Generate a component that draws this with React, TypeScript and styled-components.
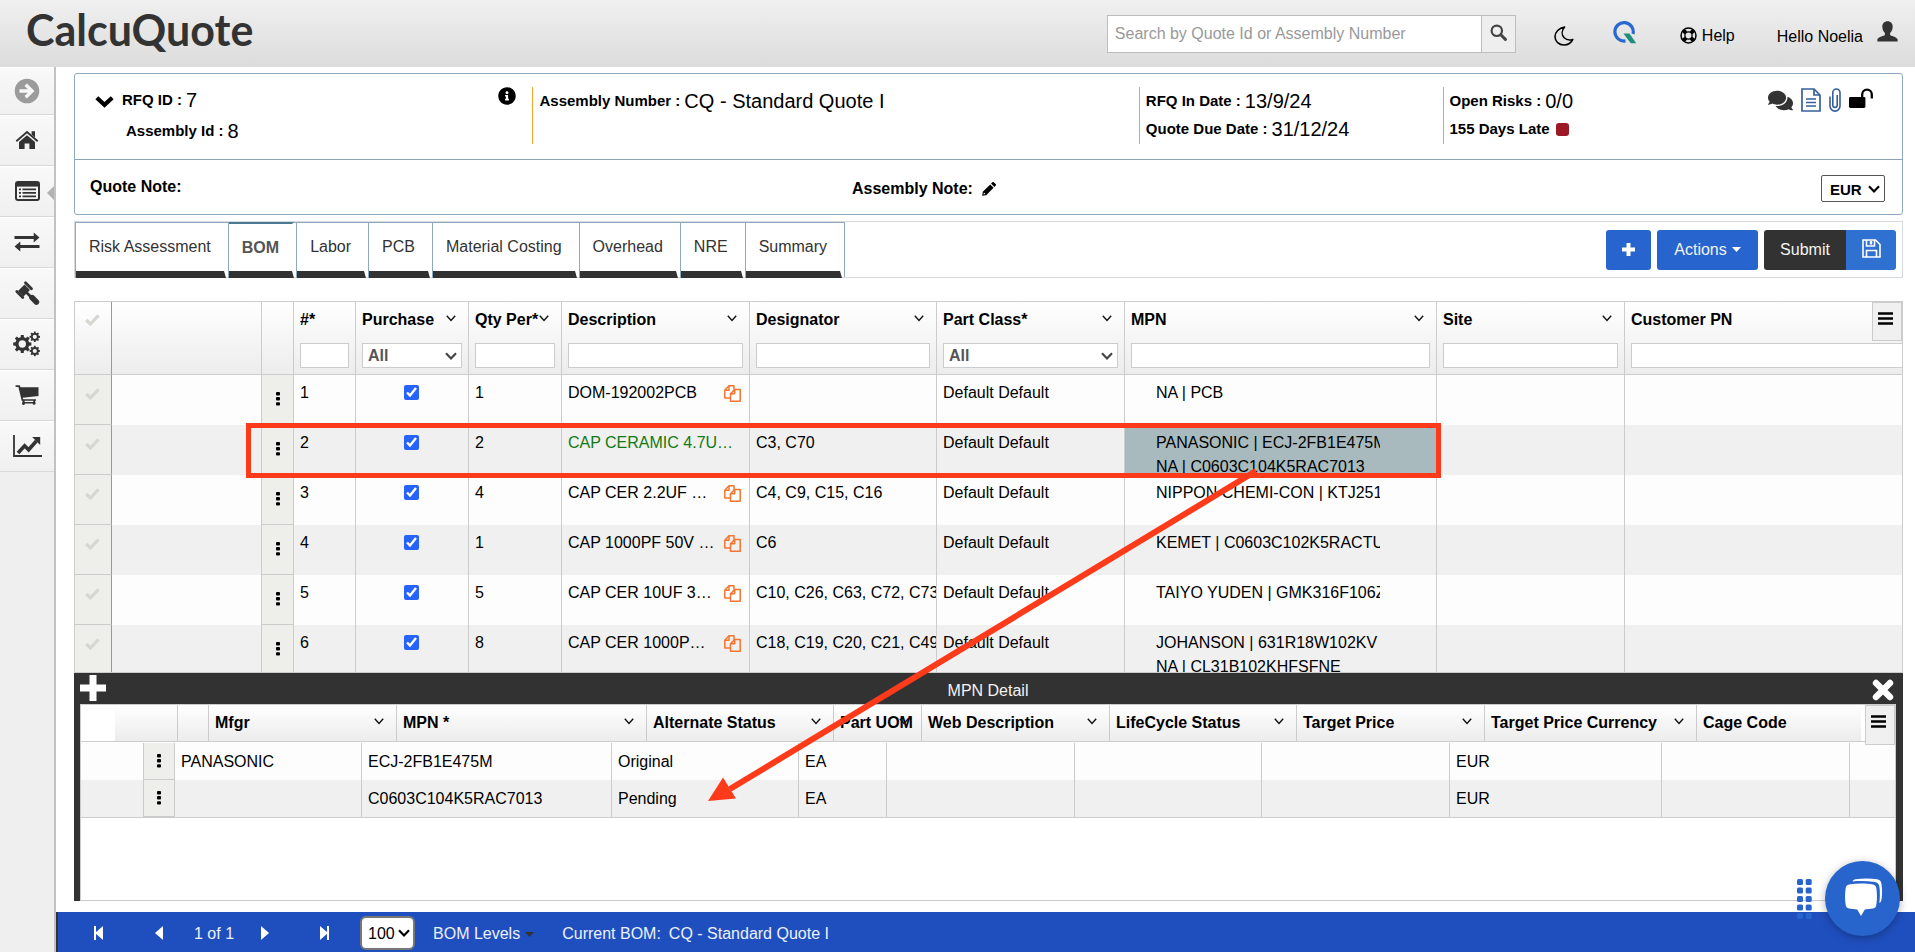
import React from 'react';
import styled, { createGlobalStyle } from 'styled-components';
import { FaInfoCircle, FaComments } from 'react-icons/fa';

const GlobalStyle = createGlobalStyle`
  *, *::before, *::after { box-sizing: border-box; }
  body {
    margin: 0;
    background: #fff;
    color: #000;
    font-family: "Liberation Sans", Arial, Helvetica, sans-serif;
    font-size: 16px;
    line-height: 20px;
  }
  button, input, select { font: inherit; color: inherit; }
  button { cursor: pointer; }
  svg { display: block; flex: none; }
`;

/* ---------- icons ---------- */

const gearPath = (cx: number, cy: number, r: number, teeth: number) => {
  const inner = r * 0.76;
  const step = (Math.PI * 2) / teeth;
  const points: string[] = [];
  for (let i = 0; i < teeth; i += 1) {
    const a = i * step;
    [
      [inner, -0.3],
      [r, -0.2],
      [r, 0.2],
      [inner, 0.3],
    ].forEach(([radius, k]) => {
      points.push(`${(cx + radius * Math.cos(a + k * step)).toFixed(2)} ${(cy + radius * Math.sin(a + k * step)).toFixed(2)}`);
    });
  }
  const h = r * 0.4;
  return `M${points.join('L')}ZM${cx - h} ${cy}a${h} ${h} 0 1 0 ${h * 2} 0a${h} ${h} 0 1 0 ${-h * 2} 0Z`;
};

const ArrowCircleIcon = () => (
  <svg width="26" height="26" viewBox="0 0 26 26">
    <circle cx="13" cy="13" r="12.3" fill="#9b9b9b" />
    <path d="M5.5 11.3h8.4l-3.4-3.4 2.4-2.4 7.6 7.5-7.6 7.5-2.4-2.4 3.4-3.4H5.5z" fill="#f7f7f7" />
  </svg>
);
const HomeIcon = () => (
  <svg width="24" height="20" viewBox="0 0 24 20" fill="#333">
    <path d="M12 5.2 20 12v7h-5.6v-5.6H9.6V19H4v-7z" />
    <path d="M1.3 11.2 12 2l10.7 9.2" fill="none" stroke="#333" strokeWidth="1.8" />
    <path d="M16.6 1.2H20v6.2l-3.4-3z" />
  </svg>
);
const ListIcon = () => (
  <svg width="25" height="20" viewBox="0 0 25 20">
    <rect x="1" y="1" width="23" height="18" rx="2" fill="none" stroke="#333" strokeWidth="2" />
    <path d="M1 1h23v4.6H1z" fill="#333" />
    <path d="M4 8.3h2M4 11.8h2M4 15.3h2M7.5 8.3H21M7.5 11.8H21M7.5 15.3H21" stroke="#333" strokeWidth="1.8" />
  </svg>
);
const ExchangeIcon = () => (
  <svg width="26" height="20" viewBox="0 0 26 20" fill="#333">
    <path d="M.5 3.9h19.2V.6l5.8 4.9-5.8 4.9V7.1H.5z" />
    <path d="M25.5 12.9H6.3V9.6L.5 14.5l5.8 4.9v-3.3h19.2z" />
  </svg>
);
const GavelIcon = () => (
  <svg width="26" height="26" viewBox="0 0 26 26" fill="none" stroke="#333" strokeLinecap="round">
    <path d="m11.500 2.800 6 6M2.800 11.500l6 6" strokeWidth="2.800" />
    <path d="m10.500 4.500 5.500 5.500-6.500 6.500L4 11z" fill="#333" stroke="none" />
    <path d="m12 12 5 5" strokeWidth="2.600" />
    <path d="m18 17.600 4.400 4.400" strokeWidth="5.600" />
  </svg>
);
const CogsIcon = () => (
  <svg width="28" height="26" viewBox="0 0 28 26" fill="#333" fillRule="evenodd">
    <path d={gearPath(9.3, 13, 9.2, 8)} />
    <path d={gearPath(21.8, 5.8, 5.3, 8)} />
    <path d={gearPath(21.8, 20, 5.3, 8)} />
  </svg>
);
const CartIcon = () => (
  <svg width="24" height="20" viewBox="0 0 24 20" fill="#333">
    <path d="M.6.2h4.2l.7 2h18V11L7.7 12.8l.5 1.4H21v1.6H6.7L3.4 2H.6z" />
    <path d="M7.6 15h2v2h8.6v-2h2v2.2a1.5 1.5 0 1 1-2.6 1.3H10a1.5 1.5 0 1 1-2.5-1.2z" />
  </svg>
);
const ChartIcon = () => (
  <svg width="29" height="22" viewBox="0 0 29 22" fill="none" stroke="#333">
    <path d="M1 0v21h28" strokeWidth="1.8" />
    <path d="m5 18 6.6-7.2 4 4L23.4 6" strokeWidth="3.6" />
    <path d="M19.2 2h8v8z" fill="#333" stroke="none" />
  </svg>
);
const SearchIcon = () => (
  <svg width="17" height="17" viewBox="0 0 17 17" fill="none" stroke="#444">
    <circle cx="6.8" cy="6.8" r="5.2" strokeWidth="2.2" />
    <path d="m10.8 10.8 4.6 4.6" strokeWidth="3" strokeLinecap="round" />
  </svg>
);
const MoonIcon = () => (
  <svg width="20" height="20" viewBox="0 0 20 20" fill="none" stroke="#000" strokeWidth="1.6" strokeLinejoin="round">
    <path d="M10.6 1C5 2 1 6 1 10.600 1 15.600 5 19 9.800 19c4 0 7.400-1.800 9-5.600-3 1-6.400.6-8.600-1.600C7.400 8.800 7.600 4.400 10.600 1z" />
  </svg>
);
const QLogo = () => (
  <svg width="25" height="23" viewBox="0 0 25 23" fill="none">
    <path d="M13.5 19.9A9.2 9.2 0 1 1 21 13" stroke="#2a69d0" strokeWidth="3.2" />
    <path d="M11.5 12.6h6l6.7 9.6h-5.4l-2.2-2.6z" fill="#1d8f7c" />
  </svg>
);
const LifeRingIcon = () => (
  <svg width="17" height="17" viewBox="0 0 17 17" fill="none" stroke="#000">
    <circle cx="8.5" cy="8.5" r="7.5" strokeWidth="1.5" />
    <circle cx="8.5" cy="8.5" r="3.6" strokeWidth="1.3" />
    <path d="m3.4 3.4 2.4 2.4M13.6 3.4l-2.4 2.4M3.4 13.6l2.4-2.4M13.6 13.6l-2.4-2.4" strokeWidth="4" />
  </svg>
);
const UserIcon = () => (
  <svg width="21" height="21" viewBox="0 0 21 21" fill="#333">
    <path d="M10.5.2c3.3 0 5.2 2.3 5.2 5.6 0 2.5-1 5-2.6 6.3v1.8c0 .7 6.9 2 7.4 4.2l.2 2.4H.3l.2-2.4C1 15.9 7.9 14.6 7.9 13.9v-1.8C6.3 10.8 5.3 8.3 5.3 5.8c0-3.3 1.9-5.6 5.2-5.6z" />
  </svg>
);
const ChevronBoldIcon = () => (
  <svg width="19" height="12" viewBox="0 0 19 12" fill="none" stroke="#000" strokeWidth="4.2">
    <path d="m1.8 1.8 7.7 7 7.7-7" />
  </svg>
);
const DocIcon = () => (
  <svg width="20" height="24" viewBox="0 0 20 24" fill="none" stroke="#35609c" strokeWidth="1.7">
    <path d="M1 1h12l6 6v16H1z" />
    <path d="M13 1v6h6" />
    <path d="M5 11h10M5 14.500h10M5 18h10" />
  </svg>
);
const ClipIcon = () => (
  <svg width="12" height="24" viewBox="0 0 12 24" fill="none" stroke="#35609c" strokeWidth="1.6">
    <path d="M1 8.5v9.6a5 5 0 0 0 10 0V4.6a3.6 3.6 0 0 0-7.2 0v12.6a2.2 2.2 0 0 0 4.4 0V7" />
  </svg>
);
const UnlockIcon = () => (
  <svg width="24" height="20" viewBox="0 0 24 20">
    <rect x="0" y="9" width="16.4" height="11" rx="1.4" fill="#000" />
    <path d="M13.2 10V6.4a4.8 4.8 0 0 1 9.6 0v4" fill="none" stroke="#000" strokeWidth="2.3" />
  </svg>
);
const PencilIcon = () => (
  <svg width="14" height="14" viewBox="0 0 14 14" fill="#000">
    <path d="M9 1.6 10.4.2a1 1 0 0 1 1.4 0l2 2a1 1 0 0 1 0 1.4L12.4 5z" />
    <path d="M8.2 2.4 11.6 5.8 4.2 13.2.2 13.8.8 9.8zM1.9 10.6l-.3 1.9 1.9-.4z" fillRule="evenodd" />
  </svg>
);
const PlusIcon = ({ size, thick }: { size: number; thick: number }) => (
  <svg width={size} height={size} viewBox={`0 0 ${size} ${size}`} stroke="#fff" strokeWidth={thick}>
    <path d={`M${size / 2} 0V${size}M0 ${size / 2}H${size}`} />
  </svg>
);
const CloseIcon = () => (
  <svg width="22" height="22" viewBox="0 0 22 22" stroke="#fff" strokeWidth="6.4" strokeLinecap="round">
    <path d="m4 4 14 14M18 4 4 18" />
  </svg>
);
const SaveIcon = () => (
  <svg width="19" height="19" viewBox="0 0 19 19" fill="none" stroke="#fff" strokeWidth="1.6">
    <path d="M1 1h12.5L18 5.5V18H1z" />
    <path d="M4.5 18v-6.5h10V18M4.5 1v6h8V1" />
    <path d="M9 2v3.5" strokeWidth="2.4" />
  </svg>
);
const CaretIcon = ({ color }: { color: string }) => (
  <svg width="9" height="5" viewBox="0 0 9 5" fill={color}>
    <path d="M0 0h9L4.5 5z" />
  </svg>
);
const ThinChevron = () => (
  <svg width="10" height="7" viewBox="0 0 10 7" fill="none" stroke="#111" strokeWidth="1.4">
    <path d="m.8.8 4.2 4.7L9.2.8" />
  </svg>
);
const SelectChevron = ({ color = '#333' }: { color?: string }) => (
  <svg width="12" height="8" viewBox="0 0 12 8" fill="none" stroke={color} strokeWidth="2.2">
    <path d="m1 1.2 5 5.2 5-5.2" />
  </svg>
);
const CheckIcon = () => (
  <svg width="15" height="12" viewBox="0 0 15 12" fill="none" stroke="#d6d6d3" strokeWidth="3.2">
    <path d="m1.2 6 4.2 4L13.6 1.4" />
  </svg>
);
const DotsIcon = () => (
  <svg width="4" height="14" viewBox="0 0 4 14" fill="#000">
    <rect width="4" height="3.4" rx="1" />
    <rect y="5.1" width="4" height="3.4" rx="1" />
    <rect y="10.2" width="4" height="3.4" rx="1" />
  </svg>
);
const CopyIcon = () => (
  <svg width="17" height="17" viewBox="0 0 17 17" fill="none" stroke="#f5752e" strokeWidth="1.5" strokeLinejoin="round">
    <path d="M6.5 13H.8V5.2L5 .8h5v4" />
    <path d="M5 .8v4.4H.8" />
    <path d="M6.5 16.2V8.800l4.200-4.200h5.500v11.600z" />
    <path d="M10.7 4.6v4.200H6.500" />
  </svg>
);
const MenuIcon = () => (
  <svg width="15" height="13" viewBox="0 0 15 13" stroke="#000" strokeWidth="2.4">
    <path d="M0 1.5h15M0 6.5h15M0 11.5h15" />
  </svg>
);
const StepIcon = ({ back, bar }: { back?: boolean; bar?: boolean }) => (
  <svg width="10" height="14" viewBox="0 0 10 14" fill="#fff">
    {back ? <path d="M9 0v14L1 7z" /> : <path d="M1 0v14l8-7z" />}
    {bar && (back ? <path d="M0 0h2v14H0z" /> : <path d="M8 0h2v14H8z" />)}
  </svg>
);
const ChatIcon = () => (
  <svg width="40" height="46" viewBox="0 0 40 46" fill="#fff">
    <path d="M6 8.5C14 7.2 23 7.2 30 8.5c2 .4 3 1.5 3.3 3.5.9 5.6.9 11.5 0 17-.3 2-1.3 3.2-3.3 3.5-2.8.5-5.5.8-8.2.9L18 40l-3.8-6.6c-2.8-.1-5.500-.4-8.200-.9-2-.3-3-1.500-3.300-3.500-.9-5.500-.9-11.400 0-17 .3-2 1.300-3.100 3.300-3.500z" />
    <path d="M9.5 5.4c.6-1.300 1.600-2 3-2.200 7-1 15-1 21.500 0 2.600.4 4 1.700 4.400 4.200.9 5.400.9 11.200 0 16.600-.2 1.400-.9 2.400-2 3 .6-5.400.7-12 0-16.300-.4-2.700-1.900-4.300-4.600-4.700-7-1.100-15-1.200-22.300-.6z" />
  </svg>
);

/* ---------- frame ---------- */

const Page = styled.div`
  display: flex;
  flex-direction: column;
  height: 100vh;
  min-height: 760px;
  overflow: hidden;
`;
const TopBar = styled.header`
  display: flex;
  align-items: center;
  flex: none;
  height: 67px;
  padding: 0 17px 0 26px;
  background: linear-gradient(#f0f0f0, #dcdcdc);
`;
const Logo = styled.a`
  margin-right: auto;
  padding-bottom: 8px;
  color: #333;
  font: bold 43px/48px Lato, "Liberation Sans", sans-serif;
  text-decoration: none;
`;
const SearchForm = styled.form`
  display: flex;
  width: 409px;
  height: 38px;
  margin-right: 38px;
  border: 1px solid #bdbdbd;
`;
const SearchInput = styled.input`
  flex: 1;
  min-width: 0;
  padding: 0 7px;
  border: 0;
  background: #fff;
  &::placeholder { color: #999; opacity: 1; }
`;
const SearchButton = styled.button`
  display: flex;
  align-items: center;
  justify-content: center;
  width: 34px;
  padding: 0 0 2px;
  border: 0;
  border-left: 1px solid #bdbdbd;
  background: #eee;
`;
const BarButton = styled.button<{ $gap?: number }>`
  display: flex;
  align-items: center;
  gap: 5px;
  margin-right: ${(p) => p.$gap ?? 0}px;
  padding: 4px 0 0;
  border: 0;
  background: none;
`;
const UserButton = styled(BarButton)`
  gap: 14px;
  padding: 0;
  svg { margin-bottom: 4px; }
  span { padding-top: 6px; }
`;
const LogoButton = styled(BarButton)`
  padding: 0 0 2px;
`;

const Body = styled.div`
  display: flex;
  flex: 1;
  min-height: 0;
`;
const Sidebar = styled.nav`
  flex: none;
  width: 56px;
  border-right: 2px solid #c2c2c2;
  background: #efefef;
`;
const SideLink = styled.a<{ $first?: boolean }>`
  position: relative;
  display: flex;
  align-items: center;
  justify-content: center;
  height: ${(p) => (p.$first ? 48 : 51)}px;
  border-bottom: 1px solid #d9d9d9;
  box-shadow: inset 0 1px #fff;
  background: linear-gradient(#f9f9f9, #f0f0f0);
`;
const ActiveMark = styled.span`
  position: absolute;
  right: 0;
  top: 20px;
  border: 7px solid transparent;
  border-left-width: 0;
  border-right-color: #b2b2b2;
`;
const Main = styled.main`
  display: flex;
  flex-direction: column;
  flex: 1;
  min-width: 0;
`;
const Workspace = styled.div`
  display: flex;
  flex-direction: column;
  flex: 1;
  min-height: 0;
  padding: 6px 12px 11px 18px;
`;

/* ---------- quote summary ---------- */

const Summary = styled.section`
  flex: none;
  border: 1px solid #8fa9c2;
  border-radius: 3px;
`;
const SummaryTop = styled.div`
  display: grid;
  grid-template-columns: 458fr 607fr 304fr 460fr;
  padding: 13px 0 15px;
  border-bottom: 1px solid #8fa3b8;
`;
const SummaryColumn = styled.div<{ $lined?: boolean }>`
  display: flex;
  align-items: flex-start;
  height: 57px;
  padding-left: ${(p) => (p.$lined ? 6 : 20)}px;
  border-left: ${(p) => (p.$lined ? '1px solid #f0a92c' : '0')};
`;
const FieldList = styled.dl<{ $indent?: boolean }>`
  display: flex;
  flex-direction: column;
  flex: 1;
  gap: ${(p) => (p.$indent ? 7 : 4)}px;
  margin: ${(p) => (p.$indent ? '1px 0 0 8px' : '2px 0 0')};
`;
const Field = styled.div<{ $inset?: boolean }>`
  display: flex;
  align-items: center;
  gap: 4px;
  height: 24px;
  padding-left: ${(p) => (p.$inset ? 4 : 0)}px;
  white-space: nowrap;
`;
const FieldName = styled.dt`
  font-size: 15px;
  font-weight: bold;
`;
const FieldValue = styled.dd`
  margin: 0;
  font-size: 20px;
  line-height: 24px;
`;
const LateFlag = styled.dd`
  width: 13px;
  height: 13px;
  margin: 0 0 0 2px;
  border-radius: 3px;
  background: #9b1826;
`;
const PlainButton = styled.button`
  display: flex;
  padding: 0;
  border: 0;
  background: none;
`;
const CollapseButton = styled(PlainButton)`
  padding-top: 9px;
`;
const InfoButton = styled(PlainButton)`
  margin-right: 16px;
`;
const QuickLinks = styled.div`
  display: flex;
  align-items: flex-start;
  gap: 8px;
  margin-right: 29px;
  padding-top: 1px;
`;
const SummaryNotes = styled.div`
  display: grid;
  grid-template-columns: 762fr 1033fr;
  align-items: center;
  height: 54px;
  padding: 0 17px 0 15px;
  font-weight: bold;
`;
const NoteCell = styled.div<{ $editable?: boolean }>`
  display: flex;
  align-items: center;
  gap: 9px;
  padding-top: ${(p) => (p.$editable ? 3 : 0)}px;
`;
const SelectBox = styled.label<{ $push?: boolean }>`
  position: relative;
  display: block;
  margin-left: ${(p) => (p.$push ? 'auto' : 0)};
  svg { position: absolute; right: 5px; top: 50%; margin-top: -4px; pointer-events: none; }
`;
const CurrencySelect = styled.select`
  width: 64px;
  height: 27px;
  padding: 2px 20px 0 8px;
  border: 1px solid #555;
  border-radius: 2px;
  appearance: none;
  background: #fff;
  font-size: 15px;
  font-weight: bold;
`;

/* ---------- tabs and actions ---------- */

const TabBar = styled.div`
  display: flex;
  flex: none;
  height: 57px;
  margin: 6px 0 23px;
  border: 1px solid #d6dade;
`;
const TabList = styled.ul`
  display: flex;
  margin: 0;
  padding: 0;
  border-top: 1px solid #8fa9c2;
  border-right: 1px solid #8fa9c2;
  list-style: none;
`;
const TabItem = styled.li<{ $active?: boolean }>`
  display: flex;
  margin-top: ${(p) => (p.$active ? -1 : 0)}px;
  margin-bottom: -1px;
  padding-right: 2px;
  border-left: 1px solid #8fa9c2;
`;
const TabButton = styled.button<{ $active?: boolean }>`
  padding: 0 13px;
  border: 0 solid transparent;
  border-top: ${(p) => (p.$active ? '2px solid #4a7a92' : '0')};
  border-right-width: 2px;
  border-bottom: 7px solid #323232;
  border-radius: 0;
  background: none;
  color: ${(p) => (p.$active ? '#555' : '#333')};
  font-weight: ${(p) => (p.$active ? 'bold' : 'normal')};
  white-space: nowrap;
`;
const ActionGroup = styled.div`
  display: flex;
  gap: 6px;
  margin: 8px 6px 0 auto;
`;
const ActionButton = styled.button<{ $width: number; $tone?: string }>`
  display: flex;
  align-items: center;
  justify-content: center;
  gap: 5px;
  width: ${(p) => p.$width}px;
  height: 40px;
  padding: 0 0 1px;
  border: 0;
  border-radius: 3px;
  background: ${(p) => p.$tone ?? '#2764cd'};
  color: #f4f4f4;
`;
const SplitButton = styled.div`
  display: flex;
  button:first-child { border-radius: 3px 0 0 3px; }
  button:last-child { border-radius: 0 3px 3px 0; padding-bottom: 4px; }
`;

/* ---------- grids ---------- */

const GridStack = styled.div`
  position: relative;
  display: flex;
  flex-direction: column;
  flex: 1;
  min-height: 0;
`;
const BomGrid = styled.div`
  position: relative;
  flex: 1;
  min-height: 0;
  overflow: hidden;
  border: 1px solid #ccc;
`;
const Table = styled.table`
  width: 100%;
  table-layout: fixed;
  border-spacing: 0;
  text-align: left;
`;
const HeadRow = styled.tr`
  background: linear-gradient(#fff, #ececec);
`;
const HeadCell = styled.th<{ $dark?: boolean; $last?: boolean }>`
  height: 73px;
  padding: ${(p) => (p.$last ? '8px 0 6px 6px' : '8px 6px 6px')};
  border-right: ${(p) => (p.$last ? '0' : `1px solid ${p.$dark ? '#999' : '#ccc'}`)};
  border-bottom: 1px solid #ccc;
  vertical-align: top;
`;
const HeadLabel = styled.div`
  display: flex;
  align-items: center;
  height: 20px;
  margin-bottom: 13px;
  padding-right: 6px;
  white-space: nowrap;
  span { flex: 1; min-width: 0; }
  svg { margin-bottom: 4px; }
`;
const HeadCheck = styled.div`
  display: flex;
  padding: 4px 0 0 4px;
`;
const FilterInput = styled.input<{ $open?: boolean }>`
  display: block;
  width: 100%;
  height: 25px;
  padding: 0 5px;
  border: 1px solid #ccc;
  border-right-width: ${(p) => (p.$open ? 0 : 1)}px;
  background: #fff;
`;
const FilterSelect = styled.select`
  display: block;
  width: 100%;
  height: 25px;
  padding: 0 20px 0 5px;
  border: 1px solid #ccc;
  border-radius: 0;
  appearance: none;
  background: #fff;
  color: #555;
  font-weight: bold;
`;
const GridMenu = styled.button<{ $height: number }>`
  position: absolute;
  top: 0;
  right: 0;
  display: flex;
  justify-content: center;
  width: 30px;
  height: ${(p) => p.$height}px;
  padding: 9px 3px 0 0;
  border: 1px solid #ccc;
  background: #f0f0f0;
`;
const BomRow = styled.tr`
  background: #fdfdfd;
  &:nth-child(even) { background: #f0f0f0; }
`;
const Cell = styled.td<{ $marked?: boolean; $last?: boolean }>`
  height: 50px;
  padding: 6px 0 0 6px;
  border-right: ${(p) => (p.$last ? '0' : '1px solid #ccc')};
  background: ${(p) => (p.$marked ? '#a8babd' : 'none')};
  vertical-align: top;
`;
const SideCell = styled.td<{ $dark?: boolean }>`
  height: 50px;
  padding: 0;
  border-right: 1px solid ${(p) => (p.$dark ? '#999' : '#ccc')};
  border-bottom: 1px solid #ccc;
  background: #eeeeea;
  vertical-align: top;
`;
const SelectButton = styled(PlainButton)`
  padding: 13px 0 0 10px;
`;
const MenuButton = styled(PlainButton)`
  justify-content: center;
  width: 100%;
  padding-top: 17px;
`;
const CellText = styled.div<{ $indent?: boolean }>`
  width: ${(p) => (p.$indent ? '224px' : 'auto')};
  height: 44px;
  margin-left: ${(p) => (p.$indent ? 25 : 0)}px;
  overflow: hidden;
  line-height: 24px;
  white-space: pre;
`;
const DescriptionText = styled.div<{ $green?: boolean }>`
  display: flex;
  justify-content: space-between;
  align-items: center;
  height: 24px;
  padding-right: 8px;
  color: ${(p) => (p.$green ? '#127a12' : 'inherit')};
  white-space: nowrap;
`;
const CheckHolder = styled.div`
  display: flex;
  justify-content: center;
  padding: 4px 8px 0 0;
`;
const Tick = styled.input`
  width: 15px;
  height: 15px;
  margin: 0;
  accent-color: #2563fb;
`;

const DetailPanel = styled.section`
  flex: none;
  padding: 0 7px 0 6px;
  background: #323232;
`;
const DetailTitle = styled.div`
  display: grid;
  grid-template-columns: 40px 1fr 40px;
  align-items: start;
  height: 31px;
  color: #f2f2f2;
  text-align: center;
  button { padding-top: 2px; }
  button:last-child { justify-content: flex-end; padding: 6px 2px 0 0; }
`;
const DetailHeading = styled.h2`
  margin: 0;
  padding-top: 8px;
  font-size: 16px;
  font-weight: normal;
`;
const DetailBox = styled.div`
  position: relative;
  height: 197px;
  overflow: hidden;
  border: 1px solid #ccc;
  background: #fff;
`;
const DetailHeadWrap = styled.div`
  padding: 0 34px;
  border-bottom: 1px solid #ccc;
`;
const DetailHeadCell = styled.th<{ $last?: boolean }>`
  height: 36px;
  padding: 0 6px;
  border-right: ${(p) => (p.$last ? '0' : '1px solid #ccc')};
  ${HeadLabel} { margin: 0; }
`;
const DetailBodyWrap = styled.div`
  margin-top: 1px;
  border-bottom: 1px solid #ccc;
`;
const DetailCell = styled.td<{ $last?: boolean }>`
  height: 37px;
  padding: 0 0 0 6px;
  border-right: ${(p) => (p.$last ? '0' : '1px solid #ccc')};
  white-space: nowrap;
`;
const DetailGap = styled.td`
  height: 37px;
  padding: 0;
`;
const DetailSide = styled(SideCell)`
  height: 37px;
  border-left: 1px solid #ccc;
  vertical-align: middle;
  ${MenuButton} { padding: 0; }
`;
const Annotation = styled.svg`
  position: absolute;
  inset: 0;
  width: 100%;
  height: 100%;
  overflow: visible;
  pointer-events: none;
`;

/* ---------- footer ---------- */

const Footer = styled.footer`
  display: flex;
  align-items: center;
  flex: none;
  height: 40px;
  padding: 2px 0 0 36px;
  border-left: 2px solid #333;
  background: #1f4fbf;
  color: #edf1fa;
`;
const PagerButton = styled.button<{ $gap: number }>`
  margin-right: ${(p) => p.$gap}px;
  padding: 0;
  border: 0;
  background: none;
`;
const PageCount = styled.span`
  margin: 2px 26px 0 0;
`;
const PageSize = styled.select`
  width: 55px;
  height: 34px;
  padding: 2px 16px 0 6px;
  border: 2px solid #777;
  border-radius: 6px;
  appearance: none;
  background: #fff;
  color: #000;
`;
const LevelsButton = styled.button`
  display: flex;
  align-items: center;
  gap: 5px;
  margin: 2px 28px 0 18px;
  padding: 0;
  border: 0;
  background: none;
`;
const CurrentBom = styled.span`
  display: flex;
  gap: 8px;
  padding-top: 2px;
`;
const ChatDock = styled.div`
  position: fixed;
  right: 15px;
  bottom: 16px;
  display: flex;
  align-items: center;
  gap: 13px;
`;
const ChatButton = styled.button`
  display: flex;
  align-items: center;
  justify-content: center;
  width: 75px;
  height: 75px;
  padding: 0;
  border: 0;
  border-radius: 50%;
  background: #2764cb;
  box-shadow: 0 2px 8px rgba(0, 0, 0, 0.3);
`;

/* ---------- data ---------- */

type Column = { name: string; width?: number; filter?: 'text' | 'select'; sortable?: boolean };

const bomColumns: Column[] = [
  { name: '#*', width: 62 },
  { name: 'Purchase', width: 113, filter: 'select', sortable: true },
  { name: 'Qty Per*', width: 93, sortable: true },
  { name: 'Description', width: 188, sortable: true },
  { name: 'Designator', width: 187, sortable: true },
  { name: 'Part Class*', width: 188, filter: 'select', sortable: true },
  { name: 'MPN', width: 312, sortable: true },
  { name: 'Site', width: 188, sortable: true },
  { name: 'Customer PN' },
];

const bomRows = [
  { qty: 1, desc: 'DOM-192002PCB', refs: '', mpn: 'NA | PCB' },
  { qty: 2, desc: 'CAP CERAMIC 4.7U…', refs: 'C3, C70', mpn: 'PANASONIC | ECJ-2FB1E475M\nNA | C0603C104K5RAC7013', selected: true },
  { qty: 4, desc: 'CAP CER 2.2UF …', refs: 'C4, C9, C15, C16', mpn: 'NIPPON CHEMI-CON | KTJ251B' },
  { qty: 1, desc: 'CAP 1000PF 50V …', refs: 'C6', mpn: 'KEMET | C0603C102K5RACTU' },
  { qty: 5, desc: 'CAP CER 10UF 3…', refs: 'C10, C26, C63, C72, C73', mpn: 'TAIYO YUDEN | GMK316F106Z' },
  { qty: 8, desc: 'CAP CER 1000P…', refs: 'C18, C19, C20, C21, C49', mpn: 'JOHANSON | 631R18W102KV\nNA | CL31B102KHFSFNE' },
];

const detailColumns: Column[] = [
  { name: 'Mfgr', width: 188, sortable: true },
  { name: 'MPN *', width: 250, sortable: true },
  { name: 'Alternate Status', width: 187, sortable: true },
  { name: 'Part UOM', width: 88, sortable: true },
  { name: 'Web Description', width: 188, sortable: true },
  { name: 'LifeCycle Status', width: 187, sortable: true },
  { name: 'Target Price', width: 188, sortable: true },
  { name: 'Target Price Currency', width: 212, sortable: true },
  { name: 'Cage Code' },
];

const detailRows = [
  ['PANASONIC', 'ECJ-2FB1E475M', 'Original', 'EA', '', '', '', 'EUR', ''],
  ['', 'C0603C104K5RAC7013', 'Pending', 'EA', '', '', '', 'EUR', ''],
];

const tabs = ['Risk Assessment', 'BOM', 'Labor', 'PCB', 'Material Costing', 'Overhead', 'NRE', 'Summary'];

const sideLinks = [
  { name: 'Expand menu', Icon: ArrowCircleIcon },
  { name: 'Home', Icon: HomeIcon },
  { name: 'Quotes', Icon: ListIcon },
  { name: 'Transfers', Icon: ExchangeIcon },
  { name: 'Rules', Icon: GavelIcon },
  { name: 'Settings', Icon: CogsIcon },
  { name: 'Purchasing', Icon: CartIcon },
  { name: 'Reports', Icon: ChartIcon },
];

const ColumnHead = ({ column }: { column: Column }) => (
  <HeadLabel>
    <span>{column.name}</span>
    {column.sortable && <ThinChevron />}
  </HeadLabel>
);

const BomTable = () => (
  <BomGrid>
    <Table>
      <colgroup>
        <col style={{ width: 37 }} />
        <col style={{ width: 150 }} />
        <col style={{ width: 32 }} />
        {bomColumns.map((c) => (
          <col key={c.name} style={{ width: c.width }} />
        ))}
      </colgroup>
      <thead>
        <HeadRow>
          <HeadCell $dark>
            <HeadCheck>
              <CheckIcon />
            </HeadCheck>
          </HeadCell>
          <HeadCell />
          <HeadCell />
          {bomColumns.map((c, i) => {
            const last = i === bomColumns.length - 1;
            return (
              <HeadCell key={c.name} $last={last}>
                <ColumnHead column={c} />
                {c.filter === 'select' ? (
                  <SelectBox>
                    <FilterSelect aria-label={`Filter ${c.name}`}>
                      <option>All</option>
                    </FilterSelect>
                    <SelectChevron color="#444" />
                  </SelectBox>
                ) : (
                  <FilterInput $open={last} aria-label={`Filter ${c.name}`} />
                )}
              </HeadCell>
            );
          })}
        </HeadRow>
      </thead>
      <tbody>
        {bomRows.map((row, i) => (
          <BomRow key={row.desc}>
            <SideCell $dark>
              <SelectButton aria-label={`Select row ${i + 1}`}>
                <CheckIcon />
              </SelectButton>
            </SideCell>
            <Cell />
            <SideCell>
              <MenuButton aria-label={`Row ${i + 1} menu`}>
                <DotsIcon />
              </MenuButton>
            </SideCell>
            <Cell>
              <CellText>{i + 1}</CellText>
            </Cell>
            <Cell>
              <CheckHolder>
                <Tick type="checkbox" defaultChecked aria-label={`Purchase row ${i + 1}`} />
              </CheckHolder>
            </Cell>
            <Cell>
              <CellText>{row.qty}</CellText>
            </Cell>
            <Cell>
              <DescriptionText $green={row.selected}>
                {row.desc}
                {!row.selected && <CopyIcon />}
              </DescriptionText>
            </Cell>
            <Cell>
              <CellText>{row.refs}</CellText>
            </Cell>
            <Cell>
              <CellText>Default Default</CellText>
            </Cell>
            <Cell $marked={row.selected}>
              <CellText $indent>{row.mpn}</CellText>
            </Cell>
            <Cell />
            <Cell $last />
          </BomRow>
        ))}
      </tbody>
    </Table>
    <GridMenu $height={39} aria-label="Grid menu">
      <MenuIcon />
    </GridMenu>
  </BomGrid>
);

const MpnDetail = () => (
  <DetailPanel>
    <DetailTitle>
      <PlainButton aria-label="Add MPN">
        <PlusIcon size={26} thick={7} />
      </PlainButton>
      <DetailHeading>MPN Detail</DetailHeading>
      <PlainButton aria-label="Close">
        <CloseIcon />
      </PlainButton>
    </DetailTitle>
    <DetailBox>
      <DetailHeadWrap>
        <Table>
          <colgroup>
            <col style={{ width: 63 }} />
            <col style={{ width: 31 }} />
            {detailColumns.map((c) => (
              <col key={c.name} style={{ width: c.width }} />
            ))}
          </colgroup>
          <thead>
            <HeadRow>
              <DetailHeadCell />
              <DetailHeadCell />
              {detailColumns.map((c, i) => (
                <DetailHeadCell key={c.name} $last={i === detailColumns.length - 1}>
                  <ColumnHead column={c} />
                </DetailHeadCell>
              ))}
            </HeadRow>
          </thead>
        </Table>
      </DetailHeadWrap>
      <DetailBodyWrap>
        <Table aria-label="MPN alternates">
          <colgroup>
            <col style={{ width: 62 }} />
            <col style={{ width: 32 }} />
            {detailColumns.map((c, i) => (
              <col key={c.name} style={{ width: i === 0 ? 187 : c.width ?? 188 }} />
            ))}
            <col />
          </colgroup>
          <tbody>
            {detailRows.map((row, i) => (
              <BomRow key={row[1]}>
                <DetailGap />
                <DetailSide>
                  <MenuButton aria-label={`Alternate ${i + 1} menu`}>
                    <DotsIcon />
                  </MenuButton>
                </DetailSide>
                {row.map((value, n) => (
                  <DetailCell key={detailColumns[n].name}>{value}</DetailCell>
                ))}
                <DetailCell $last />
              </BomRow>
            ))}
          </tbody>
        </Table>
      </DetailBodyWrap>
      <GridMenu $height={40} aria-label="Detail grid menu">
        <MenuIcon />
      </GridMenu>
    </DetailBox>
  </DetailPanel>
);

export default function App() {
  return (
    <Page>
      <GlobalStyle />
      <TopBar>
        <Logo href="#">CalcuQuote</Logo>
        <SearchForm onSubmit={(e) => e.preventDefault()}>
          <SearchInput aria-label="Search" placeholder="Search by Quote Id or Assembly Number" />
          <SearchButton aria-label="Run search">
            <SearchIcon />
          </SearchButton>
        </SearchForm>
        <BarButton $gap={38} aria-label="Dark mode">
          <MoonIcon />
        </BarButton>
        <LogoButton $gap={43} aria-label="CalcuQuote apps">
          <QLogo />
        </LogoButton>
        <BarButton $gap={42}>
          <LifeRingIcon />
          Help
        </BarButton>
        <UserButton>
          <span>Hello Noelia</span>
          <UserIcon />
        </UserButton>
      </TopBar>

      <Body>
        <Sidebar>
          {sideLinks.map(({ name, Icon }, i) => (
            <SideLink key={name} href="#" aria-label={name} $first={i === 0}>
              <Icon />
              {name === 'Quotes' && <ActiveMark />}
            </SideLink>
          ))}
        </Sidebar>

        <Main>
          <Workspace>
            <Summary>
              <SummaryTop>
                <SummaryColumn>
                  <CollapseButton aria-label="Collapse">
                    <ChevronBoldIcon />
                  </CollapseButton>
                  <FieldList $indent>
                    <Field>
                      <FieldName>RFQ ID :</FieldName>
                      <FieldValue>7</FieldValue>
                    </Field>
                    <Field $inset>
                      <FieldName>Assembly Id :</FieldName>
                      <FieldValue>8</FieldValue>
                    </Field>
                  </FieldList>
                  <InfoButton aria-label="Quote information">
                    <FaInfoCircle size={18} />
                  </InfoButton>
                </SummaryColumn>
                <SummaryColumn $lined>
                  <FieldList>
                    <Field>
                      <FieldName>Assembly Number :</FieldName>
                      <FieldValue>CQ - Standard Quote I</FieldValue>
                    </Field>
                  </FieldList>
                </SummaryColumn>
                <SummaryColumn $lined>
                  <FieldList>
                    <Field>
                      <FieldName>RFQ In Date :</FieldName>
                      <FieldValue>13/9/24</FieldValue>
                    </Field>
                    <Field>
                      <FieldName>Quote Due Date :</FieldName>
                      <FieldValue>31/12/24</FieldValue>
                    </Field>
                  </FieldList>
                </SummaryColumn>
                <SummaryColumn $lined>
                  <FieldList>
                    <Field>
                      <FieldName>Open Risks :</FieldName>
                      <FieldValue>0/0</FieldValue>
                    </Field>
                    <Field>
                      <FieldName>155 Days Late</FieldName>
                      <LateFlag />
                    </Field>
                  </FieldList>
                  <QuickLinks>
                    <PlainButton aria-label="Comments">
                      <FaComments size={25} color="#333" />
                    </PlainButton>
                    <PlainButton aria-label="Documents">
                      <DocIcon />
                    </PlainButton>
                    <PlainButton aria-label="Attachments">
                      <ClipIcon />
                    </PlainButton>
                    <PlainButton aria-label="Unlock">
                      <UnlockIcon />
                    </PlainButton>
                  </QuickLinks>
                </SummaryColumn>
              </SummaryTop>
              <SummaryNotes>
                <NoteCell>Quote Note:</NoteCell>
                <NoteCell $editable>
                  Assembly Note:
                  <PlainButton aria-label="Edit assembly note">
                    <PencilIcon />
                  </PlainButton>
                  <SelectBox $push>
                    <CurrencySelect aria-label="Currency">
                      <option>EUR</option>
                    </CurrencySelect>
                    <SelectChevron color="#000" />
                  </SelectBox>
                </NoteCell>
              </SummaryNotes>
            </Summary>

            <TabBar>
              <TabList>
                {tabs.map((name) => (
                  <TabItem key={name} $active={name === 'BOM'}>
                    <TabButton $active={name === 'BOM'}>{name}</TabButton>
                  </TabItem>
                ))}
              </TabList>
              <ActionGroup>
                <ActionButton $width={45} aria-label="Add">
                  <PlusIcon size={13} thick={4} />
                </ActionButton>
                <ActionButton $width={101}>
                  Actions
                  <CaretIcon color="#fff" />
                </ActionButton>
                <SplitButton>
                  <ActionButton $width={82} $tone="#323232">
                    Submit
                  </ActionButton>
                  <ActionButton $width={50} $tone="#2f71d0" aria-label="Save">
                    <SaveIcon />
                  </ActionButton>
                </SplitButton>
              </ActionGroup>
            </TabBar>

            <GridStack>
              <BomTable />
              <MpnDetail />
              <Annotation fill="none" stroke="#fd3a1a">
                <rect x="174.5" y="124.5" width="1190" height="50" strokeWidth="5" />
                <path d="M1182 170 656 488" strokeWidth="6" />
                <path d="m634 500 15-23.500 13 21z" fill="#fd3a1a" stroke="none" />
              </Annotation>
            </GridStack>
          </Workspace>

          <Footer>
            <PagerButton $gap={50} aria-label="First page">
              <StepIcon back bar />
            </PagerButton>
            <PagerButton $gap={30} aria-label="Previous page">
              <StepIcon back />
            </PagerButton>
            <PageCount>1 of 1</PageCount>
            <PagerButton $gap={49} aria-label="Next page">
              <StepIcon />
            </PagerButton>
            <PagerButton $gap={31} aria-label="Last page">
              <StepIcon bar />
            </PagerButton>
            <SelectBox>
              <PageSize aria-label="Page size">
                <option>100</option>
              </PageSize>
              <SelectChevron color="#000" />
            </SelectBox>
            <LevelsButton>
              BOM Levels
              <CaretIcon color="#333" />
            </LevelsButton>
            <CurrentBom>
              <span>Current BOM:</span>
              <span>CQ - Standard Quote I</span>
            </CurrentBom>
          </Footer>
        </Main>
      </Body>

      <ChatDock>
        <svg width="15" height="40" viewBox="0 0 15 40" fill="#2764cb">
          {[0, 1, 2, 3, 4].map((n) => (
            <g key={n}>
              <rect y={n * 8.5} width="6" height="6" rx="1.5" />
              <rect x="8.7" y={n * 8.5} width="6" height="6" rx="1.5" />
            </g>
          ))}
        </svg>
        <ChatButton aria-label="Open chat">
          <ChatIcon />
        </ChatButton>
      </ChatDock>
    </Page>
  );
}
